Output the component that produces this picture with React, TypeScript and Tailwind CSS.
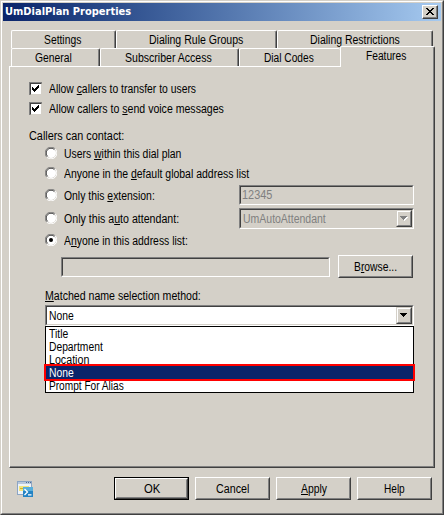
import { useLayoutEffect, useRef, useState } from "react";
import type { ReactNode } from "react";

/* Text squeezed horizontally to the narrow widths of the dialog's bitmap font. */
function Text({
  w,
  children,
  className = "h-4 leading-4",
}: {
  w: number;
  children: ReactNode;
  className?: string;
}) {
  const ref = useRef<HTMLSpanElement>(null);
  const [scale, setScale] = useState(1);
  useLayoutEffect(() => {
    if (ref.current) setScale(w / ref.current.offsetWidth);
  }, [w]);
  return (
    <span className={`block shrink-0 text-left whitespace-nowrap ${className}`} style={{ width: w }}>
      <span ref={ref} className="inline-block origin-left" style={{ transform: `scaleX(${scale})` }}>
        {children}
      </span>
    </span>
  );
}

function Key({ children }: { children: string }) {
  return <span className="underline underline-offset-1 decoration-1">{children}</span>;
}

function Tab({ w, label, className = "" }: { w: number; label: string; className?: string }) {
  return (
    <div
      className={`flex h-[18px] shrink-0 justify-center rounded-t-[2px] border-t border-l border-white ${className}`}
    >
      <Text w={w}>{label}</Text>
    </div>
  );
}

function Check({ w, children }: { w: number; children: ReactNode }) {
  return (
    <div className="flex h-5 items-start gap-[7px] pt-[2px]">
      <span className="mt-px block size-[13px] border-t border-l border-[#808080]">
        <span className="block size-3 border border-t-[#404040] border-r-[#d4d0c8] border-b-[#d4d0c8] border-l-[#404040] bg-white">
          <svg viewBox="0 0 10 10" className="size-[10px]" shapeRendering="crispEdges">
            <path d="M1 3h1v1h1v1h1v-1h1v-1h1v-1h1v-1h1v3h-1v1h-1v1h-1v1h-1v1h-1v-1h-1v-1h-1z" fill="#000" />
          </svg>
        </span>
      </span>
      <Text w={w}>{children}</Text>
    </div>
  );
}

function Radio({ w, on, className, children }: { w: number; on?: boolean; className: string; children: ReactNode }) {
  return (
    <div className={`flex items-center gap-[7px] ${className}`}>
      <svg viewBox="0 0 12 12" className="mb-[2px] size-3 shrink-0">
        <circle cx="6" cy="6" r="5" fill="#fff" />
        <path d="M1.8 10.2A5.7 5.7 0 0 1 10.2 1.8" fill="none" stroke="#808080" strokeWidth="1" />
        <path d="M2.6 9.4A4.7 4.7 0 0 1 9.4 2.6" fill="none" stroke="#404040" strokeWidth="1" />
        <path d="M10.2 1.8A5.7 5.7 0 0 1 1.8 10.2" fill="none" stroke="#fff" strokeWidth="1" />
        {on && <circle cx="6" cy="6" r="2" fill="#000" />}
      </svg>
      <Text w={w}>{children}</Text>
    </div>
  );
}

function Sunken({ className, children }: { className: string; children?: ReactNode }) {
  return (
    <div className={`border border-t-[#808080] border-r-white border-b-white border-l-[#808080] ${className}`}>
      <div className="flex h-full border border-t-[#404040] border-r-[#d4d0c8] border-b-[#d4d0c8] border-l-[#404040]">
        {children}
      </div>
    </div>
  );
}

function Arrow({ disabled }: { disabled?: boolean }) {
  return (
    <div className="ml-auto flex w-4 items-stretch border border-t-[#d4d0c8] border-r-[#404040] border-b-[#404040] border-l-[#d4d0c8] bg-[#d4d0c8]">
      <div className="flex flex-1 items-center justify-center border border-t-white border-r-[#808080] border-b-[#808080] border-l-white">
        <svg viewBox="0 0 8 5" className="h-[5px] w-2" shapeRendering="crispEdges">
          {disabled && <path d="M1 1h7v1h-1v1h-1v1h-1v1h-1v-1h-1v-1h-1v-1h-1z" fill="#fff" />}
          <path d="M0 0h7v1h-1v1h-1v1h-1v1h-1v-1h-1v-1h-1v-1h-1z" fill={disabled ? "#808080" : "#000"} />
        </svg>
      </div>
    </div>
  );
}

function Button({ w, primary, children }: { w: number; primary?: boolean; children: ReactNode }) {
  return (
    <button className={`block h-[23px] w-[75px] shrink-0 ${primary ? "border border-black" : ""}`}>
      <span className="block h-full border border-t-white border-r-[#404040] border-b-[#404040] border-l-white">
        <span className="flex h-full items-center justify-center border border-t-[#d4d0c8] border-r-[#808080] border-b-[#808080] border-l-[#d4d0c8]">
          <Text w={w} className="mt-px h-4 leading-4">{children}</Text>
        </span>
      </span>
    </button>
  );
}

const options = [
  { name: "Title", w: 19 },
  { name: "Department", w: 54 },
  { name: "Location", w: 40 },
  { name: "None", w: 25 },
  { name: "Prompt For Alias", w: 75 },
];

export default function App() {
  return (
    <div className="h-[515px] w-[444px] overflow-hidden border border-t-[#d4d0c8] border-r-[#404040] border-b-[#404040] border-l-[#d4d0c8] bg-[#d4d0c8] font-['Liberation_Sans',Arial,sans-serif] text-[12px] text-black">
      <div className="flex h-full flex-col border border-t-white border-r-[#808080] border-b-[#808080] border-l-white px-px pt-px">
        <div className="flex h-[18px] shrink-0 items-center bg-linear-to-r from-[#0a246a] to-[#a6caf0] pr-[3px] pl-[2px]">
          <Text
            w={126}
            className="h-4 font-['DejaVu_Sans_Condensed','DejaVu_Sans',sans-serif] text-[11px] leading-4 font-bold text-white"
          >
            UmDialPlan Properties
          </Text>
          <div className="ml-auto h-[14px] w-4 border border-t-white border-r-[#404040] border-b-[#404040] border-l-white bg-[#d4d0c8]">
            <div className="flex h-full justify-center border-r border-b border-[#808080] pt-[2px]">
              <svg viewBox="0 0 8 7" className="h-[7px] w-2" shapeRendering="crispEdges">
                <path
                  d="M0 0h2v1h1v1h2v-1h1v-1h2v1h-1v1h-1v1h-1v1h1v1h1v1h1v1h-2v-1h-1v-1h-2v1h-1v1h-2v-1h1v-1h1v-1h1v-1h-1v-1h-1v-1h-1z"
                  fill="#000"
                />
              </svg>
            </div>
          </div>
        </div>

        <div className="flex flex-1 flex-col pt-[9px] pr-[7px] pl-[6px]">
          <div className="flex h-[18px] pl-[2px]">
            <Tab w={37} label="Settings" className="w-[105px] border-r border-r-[#404040] pt-px pr-[2px] shadow-[inset_-1px_0_0_#808080]" />
            <Tab w={94} label="Dialing Rule Groups" className="w-[161px] border-r border-r-[#404040] pt-px pr-[2px] shadow-[inset_-1px_0_0_#808080]" />
            <Tab w={90} label="Dialing Restrictions" className="w-[156px] border-r border-r-[#404040] pt-px shadow-[inset_-1px_0_0_#808080]" />
          </div>
          <div className="flex h-[18px] pl-[2px]">
            <Tab w={37} label="General" className="w-[89px] border-r border-r-[#404040] pt-px pr-1 shadow-[inset_-1px_0_0_#808080]" />
            <Tab w={87} label="Subscriber Access" className="w-[139px] border-r border-r-[#404040] pt-px pr-[3px] shadow-[inset_-1px_0_0_#808080]" />
            <Tab w={50} label="Dial Codes" className="w-[101px] pt-px pr-[2px]" />
            <div className="relative z-10 -mt-[2px] flex h-[21px] w-[95px] shrink-0 justify-center rounded-t-[2px] border-t border-r border-l border-t-white border-r-[#404040] border-l-white bg-[#d4d0c8] pt-px pr-[3px] shadow-[inset_-1px_0_0_#808080]">
              <Text w={40}>Features</Text>
            </div>
          </div>

          <div className="h-[402px] w-[426px] shrink-0 border border-t-white border-r-[#404040] border-b-[#404040] border-l-white">
            <div className="flex h-full flex-col border-r border-b border-[#808080] pt-[12px] pl-[19px]">
              <Check w={147}>
                Allow <Key>c</Key>allers to transfer to users
              </Check>
              <Check w={175}>
                Allow callers to <Key>s</Key>end voice messages
              </Check>
              <div className="flex h-[25px] items-end">
                <Text w={95}>Callers can contact:</Text>
              </div>
              <div className="flex flex-col pl-4">
                <Radio w={117} className="h-5">
                  Users <Key>w</Key>ithin this dial plan
                </Radio>
                <Radio w={185} className="h-5">
                  Anyone in the <Key>d</Key>efault global address list
                </Radio>
                <div className="flex h-6 items-center">
                  <Radio w={91} className="h-6 w-[194px]">
                    Only this <Key>e</Key>xtension:
                  </Radio>
                  <Sunken className="mb-[2px] h-5 w-[175px] text-[#808080]">
                    <Text w={30} className="ml-px h-4 leading-4">12345</Text>
                  </Sunken>
                </div>
                <div className="flex h-[22px] items-start">
                  <Radio w={115} className="h-[22px] w-[194px]">
                    Only this a<Key>u</Key>to attendant:
                  </Radio>
                  <Sunken className="h-[21px] w-[175px] text-[#808080]">
                    <Text w={83} className="mt-px ml-[2px] h-4 leading-4">UmAutoAttendant</Text>
                    <Arrow disabled />
                  </Sunken>
                </div>
                <Radio w={124} on className="h-[22px]">
                  A<Key>n</Key>yone in this address list:
                </Radio>
                <div className="flex items-start gap-2 pt-[3px] pl-4">
                  <Sunken className="mt-[2px] h-5 w-[269px]" />
                  <Button w={43}>
                    B<Key>r</Key>owse...
                  </Button>
                </div>
                <Text w={156} className="mt-[10px] h-4 leading-4">
                  <Key>M</Key>atched name selection method:
                </Text>
                <Sunken className="mt-[1px] h-[21px] w-[369px] bg-white">
                  <Text w={25} className="mt-px ml-[2px] h-4 leading-4">None</Text>
                  <Arrow />
                </Sunken>
                <div className="h-[67px] w-[369px] border border-black bg-white">
                  {options.map((o) =>
                    o.name === "None" ? (
                      <div
                        key={o.name}
                        className="relative z-10 -mx-[2px] -my-[2px] h-[17px] border-2 border-[#ff0000] bg-[#0a246a] pl-[3px] text-white"
                      >
                        <Text w={o.w} className="h-[13px] leading-[14px]">{o.name}</Text>
                      </div>
                    ) : (
                      <div key={o.name} className="h-[13px] pl-[3px]">
                        <Text w={o.w} className="h-[13px] leading-[14px]">{o.name}</Text>
                      </div>
                    ),
                  )}
                </div>
              </div>
            </div>
          </div>

          <div className="flex gap-[6px] pt-[9px] pl-2">
            <svg viewBox="0 0 16 17" className="mt-1 mr-[75px] h-[17px] w-4 shrink-0">
              <rect x="0.5" y="0.5" width="14" height="13" fill="#eef3f8" stroke="#8ca5c4" />
              <rect x="1" y="1" width="13" height="2" fill="#b9c8dc" />
              <path d="M9 1.5h1M11 1.5h1M13 1.5h1" stroke="#4d6c95" />
              <rect x="2" y="5" width="10" height="5" fill="#f4e47c" />
              <path d="M3 7.5h5" stroke="#d0b52c" />
              <rect x="6" y="6" width="10" height="10" fill="#2383c4" />
              <rect x="6" y="6" width="10" height="4" fill="#58aedb" />
              <path d="M7.5 8l3 3-3 3M11 13.8h3.5" fill="none" stroke="#fff" strokeWidth="1.3" />
            </svg>
            <Button w={16} primary>OK</Button>
            <Button w={33}>Cancel</Button>
            <Button w={26}>
              <Key>A</Key>pply
            </Button>
            <Button w={21}>Help</Button>
          </div>
        </div>
      </div>
    </div>
  );
}
